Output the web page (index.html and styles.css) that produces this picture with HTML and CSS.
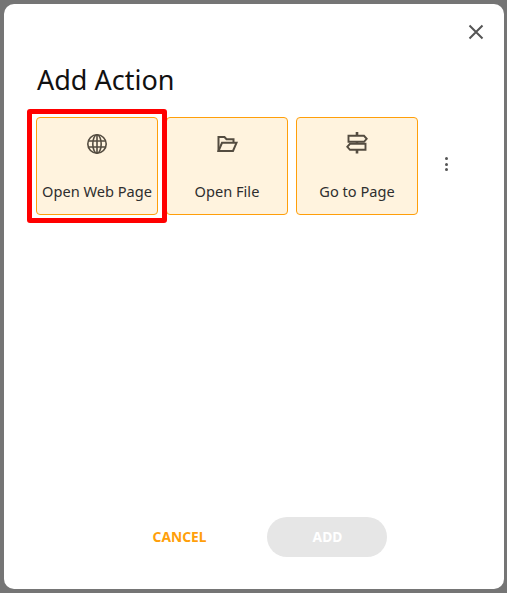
FILE: index.html
```html
<!DOCTYPE html>
<html lang="en">
<head>
    <meta charset="UTF-8">
    <meta name="viewport" content="width=device-width, initial-scale=1.0">
    <title>Add Action</title>
    <link rel="stylesheet" href="styles.css">
</head>
<body>
    <div class="dialog">
        <div class="dialog-head">
            <button class="close-btn" aria-label="Close">
                <svg width="16" height="16" viewBox="0 0 16 16"><path d="M1.5 1.5 14.5 14.5M14.5 1.5 1.5 14.5"/></svg>
            </button>
        </div>
        <h1 class="dialog-title">Add Action</h1>
        <div class="action-row">
            <div class="action-card">
                <svg class="action-icon" width="24" height="24" viewBox="0 0 24 24">
                    <circle cx="12" cy="12" r="9.2"/>
                    <ellipse cx="12" cy="12" rx="4.2" ry="9.2"/>
                    <path d="M12 2.8V21.2M3.2 9H20.8M3.2 15H20.8"/>
                </svg>
                <div class="action-name">Open Web Page</div>
            </div>
            <div class="action-card">
                <svg class="action-icon folder" width="24" height="24" viewBox="0 0 24 24">
                    <path d="M3.5 19V5H9.5L11.5 7.2H18.5V10.5"/>
                    <path d="M3.5 19 7 10.8H21.5L18 19Z"/>
                </svg>
                <div class="action-name">Open File</div>
            </div>
            <div class="action-card">
                <svg class="action-icon sign" width="24" height="24" viewBox="0 0 24 24">
                    <path class="pole" d="M12 0V3.5M12 10V11.5M12 17.5V21.5"/>
                    <path d="M3.5 3.8H19L21.7 6.8 19 9.8H3.5Z"/>
                    <path d="M20.5 11.8H5L2.3 14.8 5 17.8H20.5Z"/>
                </svg>
                <div class="action-name">Go to Page</div>
            </div>
            <button class="more-btn" aria-label="More">
                <span></span><span></span><span></span>
            </button>
        </div>
        <div class="dialog-foot">
            <button class="btn-cancel">CANCEL</button>
            <button class="btn-add" disabled>ADD</button>
        </div>
        <div class="red-box"></div>
    </div>
</body>
</html>
```

FILE: styles.css
```css
* {
    margin: 0;
    padding: 0;
    box-sizing: border-box;
    font-family: 'Noto Sans', 'Open Sans', sans-serif;
}

body {
    background-color: #757575;
    width: 507px;
    height: 593px;
    padding: 4px 3px 4px 4px;
    overflow: hidden;
}

.dialog {
    position: relative;
    background: #fff;
    border-radius: 10px;
    width: 500px;
    height: 585px;
    display: flex;
    flex-direction: column;
    padding: 0 32px;
}

.dialog-head {
    display: flex;
    justify-content: flex-end;
    padding-top: 20px;
    margin-right: -12px;
    height: 57px;
}

.close-btn {
    width: 16px;
    height: 16px;
    border: none;
    background: none;
}

.close-btn svg {
    display: block;
    fill: none;
    stroke: #555;
    stroke-width: 2;
}

.dialog-title {
    font-size: 27px;
    font-weight: 400;
    line-height: 38px;
    color: #111;
    margin-left: 1px;
}

.action-row {
    display: flex;
    align-items: center;
    gap: 8px;
    margin-top: 18px;
}

.action-card {
    width: 122px;
    height: 98px;
    background: #fff3de;
    border: 1px solid #ff9f0a;
    border-radius: 4px;
    display: flex;
    flex-direction: column;
    align-items: center;
    padding-top: 14px;
}

.action-icon {
    fill: none;
    stroke: #544c40;
    stroke-width: 1.6;
}

.action-icon.folder {
    stroke-width: 2;
}

.action-icon.sign {
    stroke-width: 1.9;
}

.action-icon .pole {
    stroke-width: 2.6;
}

.action-name {
    font-size: 14.6px;
    line-height: 20px;
    color: #2e2e2e;
    margin-top: 25px;
    white-space: nowrap;
}

.more-btn {
    display: flex;
    flex-direction: column;
    gap: 2.5px;
    width: 3px;
    margin-left: 19px;
    margin-top: -4px;
    border: none;
    background: none;
}

.more-btn span {
    width: 3px;
    height: 3px;
    border-radius: 50%;
    background: #555;
}

.dialog-foot {
    margin-top: auto;
    margin-bottom: 32px;
    display: flex;
    align-items: center;
    justify-content: center;
    gap: 61px;
    padding-left: 32px;
}

.btn-cancel,
.btn-add {
    border: none;
    background: none;
    font-size: 13.8px;
    font-weight: 700;
    padding-bottom: 2px;
}

.btn-cancel {
    color: #ff9f0a;
}

.btn-add {
    width: 120px;
    height: 40px;
    border-radius: 20px;
    background: #e6e6e6;
    color: #fff;
}

/* annotation drawn over the first card */
.red-box {
    position: absolute;
    left: 23px;
    top: 105px;
    width: 140px;
    height: 114px;
    border: 5px solid #f00;
    border-radius: 3px;
}
```
